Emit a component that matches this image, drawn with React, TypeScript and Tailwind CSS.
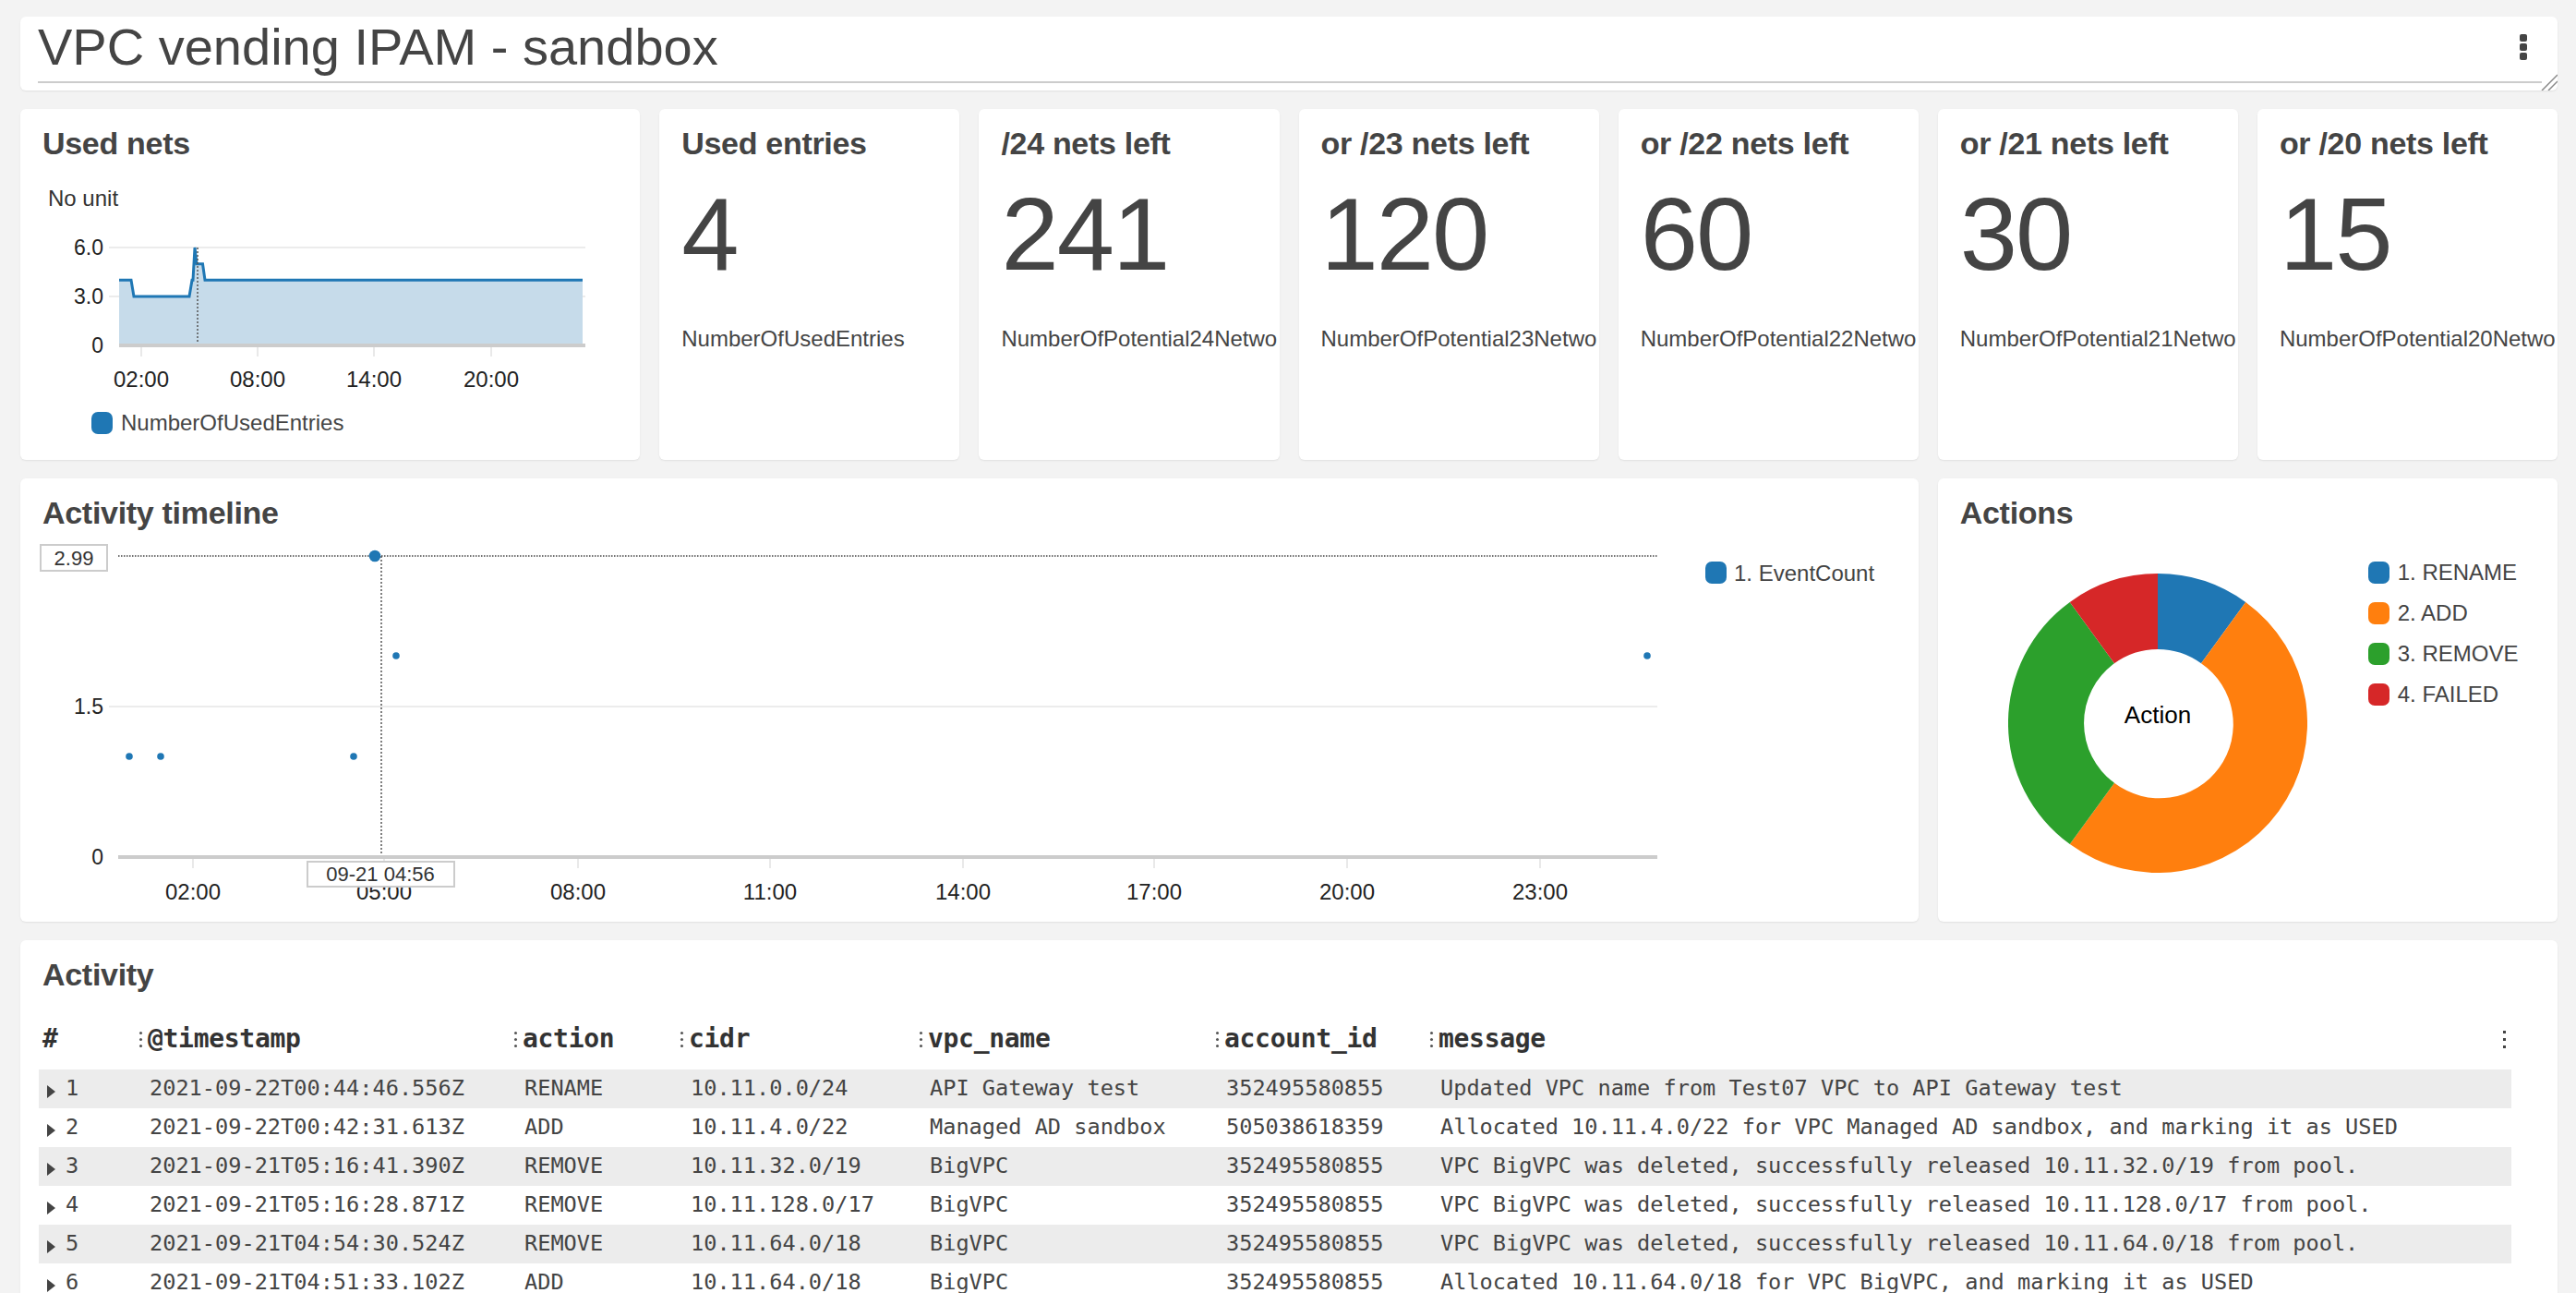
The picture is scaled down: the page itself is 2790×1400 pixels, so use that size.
const stats = [
  { title: "Used entries", value: "4", label: "NumberOfUsedEntries" },
  { title: "/24 nets left", value: "241", label: "NumberOfPotential24Networks" },
  { title: "or /23 nets left", value: "120", label: "NumberOfPotential23Networks" },
  { title: "or /22 nets left", value: "60", label: "NumberOfPotential22Networks" },
  { title: "or /21 nets left", value: "30", label: "NumberOfPotential21Networks" },
  { title: "or /20 nets left", value: "15", label: "NumberOfPotential20Networks" },
];

const rows = [
  ["2021-09-22T00:44:46.556Z", "RENAME", "10.11.0.0/24", "API Gateway test", "352495580855", "Updated VPC name from Test07 VPC to API Gateway test"],
  ["2021-09-22T00:42:31.613Z", "ADD", "10.11.4.0/22", "Managed AD sandbox", "505038618359", "Allocated 10.11.4.0/22 for VPC Managed AD sandbox, and marking it as USED"],
  ["2021-09-21T05:16:41.390Z", "REMOVE", "10.11.32.0/19", "BigVPC", "352495580855", "VPC BigVPC was deleted, successfully released 10.11.32.0/19 from pool."],
  ["2021-09-21T05:16:28.871Z", "REMOVE", "10.11.128.0/17", "BigVPC", "352495580855", "VPC BigVPC was deleted, successfully released 10.11.128.0/17 from pool."],
  ["2021-09-21T04:54:30.524Z", "REMOVE", "10.11.64.0/18", "BigVPC", "352495580855", "VPC BigVPC was deleted, successfully released 10.11.64.0/18 from pool."],
  ["2021-09-21T04:51:33.102Z", "ADD", "10.11.64.0/18", "BigVPC", "352495580855", "Allocated 10.11.64.0/18 for VPC BigVPC, and marking it as USED"],
];

const columns = ["@timestamp", "action", "cidr", "vpc_name", "account_id", "message"];

const legend = [
  { name: "1. RENAME", color: "bg-[#1f77b4]" },
  { name: "2. ADD", color: "bg-[#ff7f0e]" },
  { name: "3. REMOVE", color: "bg-[#2ca02c]" },
  { name: "4. FAILED", color: "bg-[#d62728]" },
];

const card = "bg-white rounded-[6px] shadow-[0_1px_2px_rgba(0,0,0,0.08)]";
const title = "text-[34px] leading-none font-bold text-[#444] tracking-[-0.3px]";

function Dots() {
  return (
    <div className="flex flex-col gap-[4px]">
      <span className="w-[3px] h-[3px] rounded-full bg-[#555]" />
      <span className="w-[3px] h-[3px] rounded-full bg-[#555]" />
      <span className="w-[3px] h-[3px] rounded-full bg-[#555]" />
    </div>
  );
}

function UsedNets() {
  const line =
    "M83,74.3 L96,74.3 L99,92 L159,92 L162,74.3 L163,74.3 L165,39 L167,56.7 L173.5,56.7 L176,74.3 L585,74.3";
  return (
    <div className={`${card} col-span-6 h-[380px] px-6 pt-5`}>
      <div className={title}>Used nets</div>
      <div className="mt-[29px] ml-[6px] text-[24px] leading-[28px] text-[#333]">No unit</div>
      <svg width="623" height="200" className="block">
        <line x1="72" y1="39" x2="588" y2="39" stroke="#ececec" strokeWidth="2" />
        <line x1="72" y1="92" x2="588" y2="92" stroke="#ececec" strokeWidth="2" />
        <path d={`${line} L585,145 L83,145 Z`} fill="#c6dbea" />
        <path d={line} fill="none" stroke="#1f77b4" strokeWidth="3" />
        <line x1="168" y1="39" x2="168" y2="145" stroke="#555" strokeWidth="1.5" strokeDasharray="2 2" />
        <line x1="83" y1="145" x2="588" y2="145" stroke="#cccccc" strokeWidth="4" />
        {[107, 233, 359, 486].map((x) => (
          <line key={x} x1={x} y1="147" x2={x} y2="157" stroke="#e2e2e2" strokeWidth="1.5" />
        ))}
        {[
          ["6.0", 39],
          ["3.0", 92],
          ["0", 145],
        ].map(([t, y]) => (
          <text key={t} x="66" y={y} fontSize="23" fill="#222" textAnchor="end" dominantBaseline="central">
            {t}
          </text>
        ))}
        {[
          ["02:00", 107],
          ["08:00", 233],
          ["14:00", 359],
          ["20:00", 486],
        ].map(([t, x]) => (
          <text key={t} x={x} y="181" fontSize="24" fill="#222" textAnchor="middle" dominantBaseline="central">
            {t}
          </text>
        ))}
      </svg>
      <div className="mt-[15px] ml-[53px] flex items-center gap-[9px]">
        <span className="w-[23px] h-[24px] rounded-[7px] bg-[#1f77b4]" />
        <span className="text-[24px] leading-[28px] text-[#444]">NumberOfUsedEntries</span>
      </div>
    </div>
  );
}

function Stat({ s }: { s: (typeof stats)[number] }) {
  return (
    <div className={`${card} col-span-3 h-[380px] pl-6 pr-[3px] pt-5 overflow-hidden`}>
      <div className={`${title} whitespace-nowrap`}>{s.title}</div>
      <div className="mt-[26px] text-[112px] leading-none text-[#444] tracking-[-2px]">{s.value}</div>
      <div className="mt-[43px] text-[24px] leading-[28px] text-[#444] whitespace-nowrap overflow-hidden">
        {s.label}
      </div>
    </div>
  );
}

function Timeline() {
  const ticks = [
    ["02:00", 187],
    ["05:00", 394],
    ["08:00", 604],
    ["11:00", 812],
    ["14:00", 1021],
    ["17:00", 1228],
    ["20:00", 1437],
    ["23:00", 1646],
  ] as const;
  const pts = [
    [118, 239],
    [152, 239],
    [361, 239],
    [407, 130],
    [1762, 130],
  ];
  return (
    <div className={`${card} col-span-18 h-[480px]`}>
      <div className={`${title} px-6 pt-5`}>Activity timeline</div>
      <svg width="2055" height="400" className="block mt-[8px]">
        <line x1="96" y1="185" x2="1773" y2="185" stroke="#ececec" strokeWidth="2" />
        <line x1="106" y1="22" x2="1773" y2="22" stroke="#444" strokeWidth="1.5" strokeDasharray="1.5 1.5" />
        <line x1="391" y1="22" x2="391" y2="348" stroke="#555" strokeWidth="1.5" strokeDasharray="2 2" />
        <line x1="106" y1="348" x2="1773" y2="348" stroke="#cccccc" strokeWidth="4" />
        {ticks.map(([t, x]) => (
          <line key={t} x1={x} y1="350" x2={x} y2="360" stroke="#e2e2e2" strokeWidth="1.5" />
        ))}
        {ticks.map(([t, x]) => (
          <text key={t} x={x} y="385" fontSize="24" fill="#222" textAnchor="middle" dominantBaseline="central">
            {t}
          </text>
        ))}
        <text x="90" y="185" fontSize="23" fill="#222" textAnchor="end" dominantBaseline="central">
          1.5
        </text>
        <text x="90" y="348" fontSize="23" fill="#222" textAnchor="end" dominantBaseline="central">
          0
        </text>
        {pts.map(([x, y]) => (
          <circle key={x} cx={x} cy={y} r="3.8" fill="#1f77b4" />
        ))}
        <circle cx="384" cy="22" r="6.3" fill="#1f77b4" />
        <rect x="22" y="10" width="72" height="28" fill="#fff" stroke="#cccccc" strokeWidth="2" />
        <text x="58" y="24" fontSize="22" fill="#333" textAnchor="middle" dominantBaseline="central">
          2.99
        </text>
        <rect x="311" y="353" width="159" height="27" fill="#fff" stroke="#cccccc" strokeWidth="2" />
        <text x="390" y="366.5" fontSize="22" fill="#333" textAnchor="middle" dominantBaseline="central">
          09-21 04:56
        </text>
        <rect x="1825" y="28" width="23" height="24" rx="7" fill="#1f77b4" />
        <text x="1856" y="40" fontSize="24" fill="#444" dominantBaseline="central">
          1. EventCount
        </text>
      </svg>
    </div>
  );
}

function Actions() {
  return (
    <div className={`${card} col-span-6 h-[480px] px-6 pt-5`}>
      <div className={title}>Actions</div>
      <div className="mt-[30px] flex items-start">
        <svg width="324" height="324" className="ml-[52px] mt-[19px] shrink-0">
          <path d="M162,0 A162,162 0 0 1 257.2,30.9 L209,97.3 A80,80 0 0 0 162,82 Z" fill="#1f77b4" />
          <path d="M257.2,30.9 A162,162 0 1 1 66.8,293.1 L115,226.7 A80,80 0 1 0 209,97.3 Z" fill="#ff7f0e" />
          <path d="M66.8,293.1 A162,162 0 0 1 66.8,30.9 L115,97.3 A80,80 0 0 0 115,226.7 Z" fill="#2ca02c" />
          <path d="M66.8,30.9 A162,162 0 0 1 162,0 L162,82 A80,80 0 0 0 115,97.3 Z" fill="#d62728" />
          <text x="162" y="162" fontSize="26" fill="#000" textAnchor="middle">
            Action
          </text>
        </svg>
        <div className="ml-[66px] mt-[6px] flex flex-col gap-[20px]">
          {legend.map((l) => (
            <div key={l.name} className="flex items-center gap-[9px] h-[24px]">
              <span className={`w-[23px] h-[24px] rounded-[7px] ${l.color}`} />
              <span className="text-[24px] leading-none text-[#444] whitespace-nowrap">{l.name}</span>
            </div>
          ))}
        </div>
      </div>
    </div>
  );
}

const gridCols = "grid grid-cols-[109px_406px_180px_259px_321px_232px_1fr]";

function Activity() {
  return (
    <div className={`${card} col-span-24 h-[520px] overflow-hidden`}>
      <div className={`${title} px-6 pt-5`}>Activity</div>
      <div className="ml-[20px] mr-[50px] mt-[32px] font-['DejaVu_Sans_Mono',monospace]">
        <div className={`${gridCols} h-[42px] items-center text-[28px] font-bold text-[#333] tracking-[-0.3px]`}>
          <div className="pl-[4px]">#</div>
          {columns.map((c, i) => (
            <div key={c} className="flex items-center gap-[6px]">
              <Dots />
              <span>{c}</span>
              {i === columns.length - 1 && (
                <div className="ml-auto mr-[6px] flex flex-col gap-[5px]">
                  <span className="w-[3px] h-[3px] bg-[#444]" />
                  <span className="w-[3px] h-[3px] bg-[#444]" />
                  <span className="w-[3px] h-[3px] bg-[#444]" />
                </div>
              )}
            </div>
          ))}
        </div>
        <div className="mt-[12px]">
          {rows.map((r, i) => (
            <div
              key={i}
              className={`${gridCols} h-[42px] items-center text-[23.6px] text-[#444] whitespace-nowrap ${
                i % 2 === 0 ? "bg-[#ececec]" : "bg-white"
              }`}
            >
              <div className="flex items-center">
                <span className="ml-[9px] mt-[6px] w-0 h-0 border-y-[7px] border-y-transparent border-l-[9px] border-l-[#444]" />
                <span className="ml-[11px]">{i + 1}</span>
              </div>
              {r.map((c, j) => (
                <div key={j} className="pl-[11px]">
                  {c}
                </div>
              ))}
            </div>
          ))}
        </div>
      </div>
    </div>
  );
}

export default function App() {
  return (
    <div className="min-h-screen bg-[#f3f3f3] pl-[22px] pr-[20px] pt-[18px] font-['Liberation_Sans',Arial,sans-serif]">
      <div className={`${card} relative h-[80px] mb-[20px]`}>
        <div className="ml-[19px] mr-[17px] h-[72px] pt-[5px] border-b-2 border-[#cccccc]">
          <h1 className="text-[56px] leading-none text-[#444]">VPC vending IPAM - sandbox</h1>
        </div>
        <div className="absolute right-[33px] top-[19px] flex flex-col gap-[2px]">
          <span className="w-[8px] h-[8px] rounded-[2px] bg-[#444]" />
          <span className="w-[8px] h-[8px] rounded-[2px] bg-[#444]" />
          <span className="w-[8px] h-[8px] rounded-[2px] bg-[#444]" />
        </div>
        <svg width="20" height="20" className="absolute right-0 bottom-0">
          <line x1="20" y1="3" x2="3" y2="20" stroke="#888" strokeWidth="1.5" />
          <line x1="20" y1="10" x2="10" y2="20" stroke="#888" strokeWidth="1.5" />
        </svg>
      </div>
      <div className="grid grid-cols-24 gap-x-[21px] gap-y-[20px]">
        <UsedNets />
        {stats.map((s) => (
          <Stat key={s.title} s={s} />
        ))}
        <Timeline />
        <Actions />
        <Activity />
      </div>
    </div>
  );
}
